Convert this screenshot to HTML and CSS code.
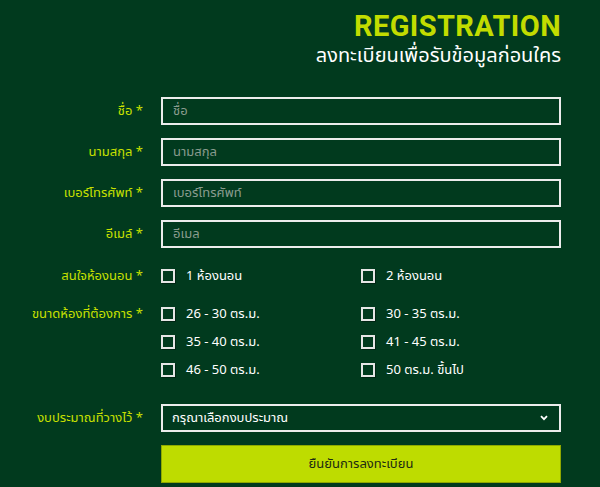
FILE: index.html
```html
<!DOCTYPE html>
<html lang="th">
<head>
<meta charset="utf-8">
<title>Registration</title>
<link rel="stylesheet" href="styles.css">
</head>
<body>
<div class="page">
  <header class="head">
    <h1 class="title">REGISTRATION</h1>
    <p class="subtitle">ลงทะเบียนเพื่อรับข้อมูลก่อนใคร</p>
  </header>
  <form class="form">
    <div class="row text-row">
      <label class="label">ชื่อ *</label>
      <input class="field" type="text" placeholder="ชื่อ">
    </div>
    <div class="row text-row">
      <label class="label">นามสกุล *</label>
      <input class="field" type="text" placeholder="นามสกุล">
    </div>
    <div class="row text-row">
      <label class="label">เบอร์โทรศัพท์ *</label>
      <input class="field" type="text" placeholder="เบอร์โทรศัพท์">
    </div>
    <div class="row text-row">
      <label class="label">อีเมล์ *</label>
      <input class="field" type="text" placeholder="อีเมล">
    </div>
    <div class="row check-row rooms">
      <label class="label">สนใจห้องนอน *</label>
      <div class="checks">
        <label class="check"><input type="checkbox" class="box"><span>1 ห้องนอน</span></label>
        <label class="check"><input type="checkbox" class="box"><span>2 ห้องนอน</span></label>
      </div>
    </div>
    <div class="row check-row sizes">
      <label class="label">ขนาดห้องที่ต้องการ *</label>
      <div class="checks">
        <label class="check"><input type="checkbox" class="box"><span>26 - 30 ตร.ม.</span></label>
        <label class="check"><input type="checkbox" class="box"><span>30 - 35 ตร.ม.</span></label>
        <label class="check"><input type="checkbox" class="box"><span>35 - 40 ตร.ม.</span></label>
        <label class="check"><input type="checkbox" class="box"><span>41 - 45 ตร.ม.</span></label>
        <label class="check"><input type="checkbox" class="box"><span>46 - 50 ตร.ม.</span></label>
        <label class="check"><input type="checkbox" class="box"><span>50 ตร.ม. ขึ้นไป</span></label>
      </div>
    </div>
    <div class="row select-row">
      <label class="label">งบประมาณที่วางไว้ *</label>
      <div class="select">
        <span>กรุณาเลือกงบประมาณ</span>
        <svg class="chev" width="8" height="6" viewBox="0 0 8 6"><path d="M1 1.2 L4 4.2 L7 1.2" fill="none" stroke="#ffffff" stroke-width="1.8"/></svg>
      </div>
    </div>
    <div class="row btn-row">
      <span></span>
      <button type="button" class="submit">ยืนยันการลงทะเบียน</button>
    </div>
  </form>
</div>
</body>
</html>
```
FILE: styles.css
```css
html, body {
  margin: 0;
  padding: 0;
  background: #013a1e;
}
body {
  font-family: "Noto Sans Thai", "Noto Sans", "DejaVu Sans", sans-serif;
  color: #ffffff;
  width: 600px;
  height: 487px;
  overflow: hidden;
}
.page {
  padding: 0 39px 0 0;
}
.head {
  text-align: right;
  padding-top: 10px;
}
.title {
  margin: 0;
  font-family: Roboto, "Liberation Sans", sans-serif;
  font-weight: 700;
  font-size: 29px;
  line-height: 33px;
  color: #c2dc00;
  letter-spacing: 0.4px;
}
.subtitle {
  margin: 0;
  font-size: 20px;
  line-height: 26px;
  color: #ffffff;
}
.form {
  margin-top: 28px;
  display: flex;
  flex-direction: column;
}
.row {
  display: grid;
  grid-template-columns: 143px 400px;
  column-gap: 18px;
  align-items: center;
}
.label {
  text-align: right;
  color: #c8e000;
  font-size: 13px;
  white-space: nowrap;
}
.text-row {
  margin-bottom: 13px;
}
.field {
  box-sizing: border-box;
  height: 28px;
  width: 400px;
  margin: 0;
  border: 2px solid #ececec;
  background: transparent;
  padding: 0 10px;
  font-family: inherit;
  font-size: 13px;
  color: #fff;
  outline: none;
}
.field::placeholder {
  color: #8a9c8e;
}
.rooms {
  margin-top: 8px;
  align-items: start;
}
.sizes {
  margin-top: 24px;
  align-items: start;
}
.checks {
  display: grid;
  grid-template-columns: 200px 200px;
  row-gap: 14px;
}
.check-row .label {
  line-height: 14px;
}
.check {
  display: flex;
  align-items: center;
  gap: 11px;
  font-size: 13px;
  line-height: 14px;
  color: #ffffff;
}
.box {
  appearance: none;
  -webkit-appearance: none;
  box-sizing: border-box;
  width: 14px;
  height: 14px;
  margin: 0;
  border: 2px solid #e6e6e6;
  background: transparent;
  box-shadow: 1px 1px 0 rgba(0,0,0,0.35);
}
.select-row {
  margin-top: 27px;
}
.select {
  box-sizing: border-box;
  height: 28px;
  border: 2px solid #ececec;
  display: flex;
  align-items: center;
  justify-content: space-between;
  padding: 0 11px 0 9px;
  font-size: 13px;
  color: #ffffff;
}
.btn-row {
  margin-top: 13px;
}
.submit {
  box-sizing: border-box;
  height: 38px;
  width: 400px;
  margin: 0;
  background: #bedc00;
  border: 1px solid #8fa800;
  font-family: inherit;
  font-size: 13px;
  color: #1d2a12;
  cursor: pointer;
}
```
